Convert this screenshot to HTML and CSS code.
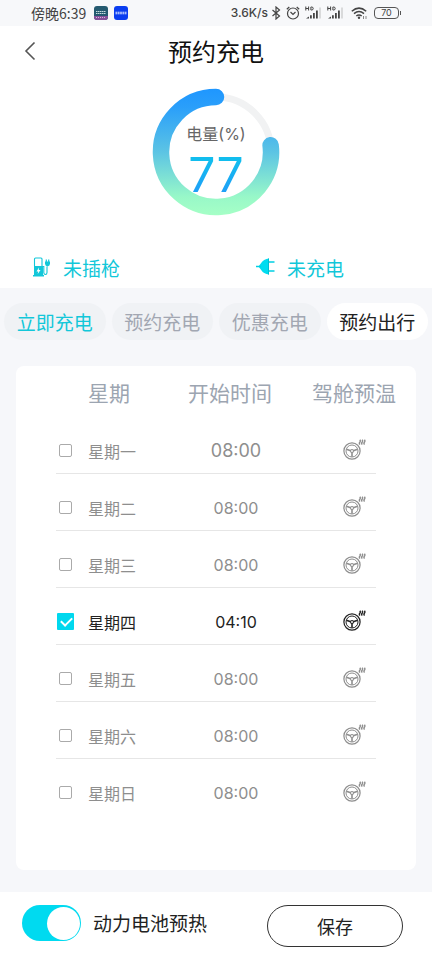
FILE: index.html
```html
<!DOCTYPE html>
<html lang="zh-CN">
<head>
<meta charset="utf-8">
<meta name="viewport" content="width=device-width, initial-scale=1">
<title>预约充电</title>
<link rel="stylesheet" href="styles.css">
</head>
<body>
<svg class="defs" aria-hidden="true">
  <symbol id="wheel" viewBox="0 0 24 22">
    <g fill="none" stroke="currentColor">
      <circle cx="10" cy="12" r="8.100" stroke-width="1.200"/>
      <circle cx="10" cy="12" r="6" stroke-width="1"/>
      <path d="M4.500 10.300L8.600 11.700M15.500 10.300L11.400 11.700M10 13.300V17.700" stroke-width="1.600"/>
      <circle cx="10" cy="12" r="1.500" stroke-width="1.100"/>
      <path d="M17.800 .8q1 1.200 0 2.400t.2 2.400M20.100 .8q1 1.200 0 2.400t.2 2.400M22.400 .8q1 1.200 0 2.400t.2 2.400" stroke-width="1.400"/>
    </g>
  </symbol>
  <symbol id="signal" viewBox="0 0 17 14">
    <g fill="none" stroke="currentColor" stroke-width="1">
      <path d="M.8 .5v4M3.600 .5v4M.8 2.500h2.800M5.900 1v3h.8q1.500 0 1.500-1.500t-1.500-1.500z"/>
    </g>
    <path d="M1 12.500l3-2v2zM5 9.300h1.800v3.200H5zM8 7h1.800v5.500H8zM11 4.500h1.800v8H11z" fill="currentColor"/>
    <path d="M14.500 1.500h1v11h-1z" fill="#bbb"/>
  </symbol>
</svg>

<div class="status">
  <span class="clock">傍晚6:39</span>
  <svg class="app" viewBox="0 0 14 14" aria-hidden="true">
    <rect width="14" height="14" rx="3" fill="#245a70"/>
    <path d="M0 10h14v1q0 3-3 3H3q-3 0-3-3z" fill="#86519a"/>
    <path d="M2 5.500h10M2 7.500h10" stroke="#c4dcdc" stroke-width="1.200" stroke-dasharray="1.500 .5"/>
    <path d="M2 11.500h9" stroke="#d9b6dc" stroke-dasharray="1 1"/>
  </svg>
  <svg class="app" viewBox="0 0 14 14" aria-hidden="true">
    <rect width="14" height="14" rx="3" fill="#0a3df0"/>
    <path d="M1.500 6.300h11M1.500 7.700h11" stroke="#dbe5ff" stroke-width="1.100" stroke-dasharray="1.800 .5"/>
  </svg>
  <span class="speed">3.6K/s</span>
  <svg class="bluetooth" viewBox="0 0 10 14" aria-hidden="true"><path d="M1.500 4l7 6L5 13V1l3.500 3-7 6" fill="none" stroke="currentColor" stroke-width="1.200"/></svg>
  <svg class="alarm" viewBox="0 0 14 14" aria-hidden="true"><g fill="none" stroke="currentColor" stroke-width="1.200"><circle cx="7" cy="7.500" r="5.500"/><path d="M4.500 6L7 8.500 9.500 6M.8 3.200L3.300 1M13.200 3.200L10.700 1"/></g></svg>
  <svg class="signal" aria-hidden="true"><use href="#signal"/></svg>
  <svg class="signal" aria-hidden="true"><use href="#signal"/></svg>
  <svg class="wifi" viewBox="0 0 17 14" aria-hidden="true"><g fill="none" stroke="currentColor" stroke-width="1.500"><path d="M.8 5.200q7.200-6.200 14.400 0M3 7.600q5-4.200 10 0M5.300 10q2.700-2.200 5.400 0"/></g><circle cx="8" cy="11.800" r="1.200" fill="currentColor"/><path d="M12.500 10v3M15 10v3" stroke="#888"/></svg>
  <span class="battery">70</span>
</div>

<header class="top">
  <button class="back" type="button" aria-label="返回"><svg viewBox="0 0 12 20" aria-hidden="true"><path d="M10.500 1.500L2 10l8.500 8.500" fill="none" stroke="currentColor" stroke-width="1.600"/></svg></button>
  <h1>预约充电</h1>
</header>

<section class="charge">
  <div class="gauge">
    <svg viewBox="0 0 128 128" aria-hidden="true">
      <defs><linearGradient id="ring" gradientUnits="userSpaceOnUse" x1="0" y1="0" x2="0" y2="128"><stop offset="0" stop-color="#1e96ff"/><stop offset=".15" stop-color="#2a9ffa"/><stop offset=".5" stop-color="#5cc4e4"/><stop offset=".85" stop-color="#98f8c8"/><stop offset="1" stop-color="#a6ffc6"/></linearGradient></defs>
      <circle cx="64" cy="64" r="55" fill="none" stroke="#f1f2f3" stroke-width="7"/>
      <path d="M64 9A55 55 0 1 0 118.600 57.300" fill="none" stroke="url(#ring)" stroke-width="16.500" stroke-linecap="round"/>
    </svg>
    <div class="reading"><span class="caption">电量(%)</span><strong>77</strong></div>
  </div>
  <div class="states">
    <p class="state">
      <svg viewBox="0 0 20 20" aria-hidden="true"><g fill="none" stroke="currentColor" stroke-width="1.100"><path d="M2.500 9V2q0-1 1-1H9q1 0 1 1v7M10.500 9.500h1.300v6q0 2 1.600 2t1.600-2V9.500"/></g><path d="M2 9h9v9.500H2zM1 18h11v1.500H1zM13 4.500h5v2.300q0 2-2.500 2.700-2.500-.7-2.500-2.700z" fill="currentColor"/><path d="M14.300 2.500v2.500M16.700 2.500v2.500" stroke="currentColor" stroke-width="1.200"/><path d="M7 10.500l-2.500 4h1.700L5.700 17l2.800-4H6.800z" fill="#fff"/></svg>
      未插枪
    </p>
    <p class="state">
      <svg viewBox="0 0 20 20" aria-hidden="true"><path d="M13 1.500v16Q7.500 17 4.800 12.500L2.500 9.500 4.800 6.500Q7.500 2 13 1.500z" fill="#00dcf0"/><path d="M0 9.500h5M13 5h5.500M13 14h5.500" stroke="#00d0e4" stroke-width="1.400" fill="none"/><path d="M12.500 1.500v16" stroke="#00bfd2"/></svg>
      未充电
    </p>
  </div>
</section>

<main>
  <nav class="tabs">
    <button type="button" class="now">立即充电</button>
    <button type="button">预约充电</button>
    <button type="button">优惠充电</button>
    <button type="button" class="current">预约出行</button>
  </nav>
  <div class="card">
    <table>
      <colgroup><col class="c-check"><col class="c-day"><col class="c-time"><col class="c-heat"></colgroup>
      <thead><tr><td></td><th scope="col">星期</th><th scope="col" class="time">开始时间</th><th scope="col" class="heat">驾舱预温</th></tr></thead>
      <tbody>
        <tr><td class="check"><input type="checkbox" id="d1"></td><td><label for="d1">星期一</label></td><td class="time large">08:00</td><td class="heat"><svg role="img" aria-label="驾舱预温"><use href="#wheel"/></svg></td></tr>
        <tr><td class="check"><input type="checkbox" id="d2"></td><td><label for="d2">星期二</label></td><td class="time">08:00</td><td class="heat"><svg role="img" aria-label="驾舱预温"><use href="#wheel"/></svg></td></tr>
        <tr><td class="check"><input type="checkbox" id="d3"></td><td><label for="d3">星期三</label></td><td class="time">08:00</td><td class="heat"><svg role="img" aria-label="驾舱预温"><use href="#wheel"/></svg></td></tr>
        <tr class="active"><td class="check"><input type="checkbox" id="d4" checked></td><td><label for="d4">星期四</label></td><td class="time">04:10</td><td class="heat"><svg role="img" aria-label="驾舱预温"><use href="#wheel"/></svg></td></tr>
        <tr><td class="check"><input type="checkbox" id="d5"></td><td><label for="d5">星期五</label></td><td class="time">08:00</td><td class="heat"><svg role="img" aria-label="驾舱预温"><use href="#wheel"/></svg></td></tr>
        <tr><td class="check"><input type="checkbox" id="d6"></td><td><label for="d6">星期六</label></td><td class="time">08:00</td><td class="heat"><svg role="img" aria-label="驾舱预温"><use href="#wheel"/></svg></td></tr>
        <tr><td class="check"><input type="checkbox" id="d7"></td><td><label for="d7">星期日</label></td><td class="time">08:00</td><td class="heat"><svg role="img" aria-label="驾舱预温"><use href="#wheel"/></svg></td></tr>
      </tbody>
    </table>
  </div>
</main>

<footer>
  <input type="checkbox" role="switch" class="switch" id="preheat" checked>
  <label for="preheat">动力电池预热</label>
  <button type="button" class="save">保存</button>
</footer>
</body>
</html>
```
FILE: styles.css
```css
* { box-sizing: border-box; }

body {
  margin: 0;
  min-height: 100vh;
  display: flex;
  flex-direction: column;
  background: #fff;
  color: #222;
  font-family: "Noto Sans CJK SC", sans-serif;
}

button { font: inherit; margin: 0; padding: 0; border: 0; cursor: pointer; }
svg { display: block; }
.defs { position: absolute; width: 0; height: 0; }

.speed, .battery, .caption, .reading strong, tbody .time {
  font-family: Inter, "Noto Sans CJK SC", sans-serif;
}

/* status bar */
.status {
  display: flex;
  align-items: center;
  height: 26px;
  padding: 0 30px 0 31px;
  background: #f7f8fa;
  color: #444;
  font-size: 14px;
  line-height: 26px;
}
.clock { margin-right: 8px; }
.app { width: 14px; height: 14px; margin-right: 6px; }
.speed { margin-left: auto; font-size: 12px; font-weight: 500; }
.bluetooth { width: 10px; height: 14px; margin-left: 3px; }
.alarm { width: 14px; height: 14px; margin-left: 5px; }
.signal { width: 17px; height: 14px; margin-left: 5px; }
.wifi { width: 17px; height: 14px; margin: 0 6px 0 7px; }
.battery {
  position: relative;
  width: 25px;
  height: 12px;
  margin-right: 3px;
  border: 1px solid #555;
  border-radius: 4px;
  font-size: 9px;
  line-height: 10px;
  text-align: center;
}
.battery::after {
  content: "";
  position: absolute;
  top: 3px;
  right: -3px;
  width: 1px;
  height: 4px;
  background: #555;
}

/* title */
.top {
  display: grid;
  grid-template-columns: 1fr auto 1fr;
  align-items: center;
  height: 50px;
  padding: 0 24px;
}
.back { width: 12px; background: none; color: #555; }
.back svg { width: 12px; height: 20px; }
h1 { margin: 0; font-size: 24px; line-height: 50px; font-weight: 400; color: #111; }

/* battery gauge */
.charge { padding-top: 12px; }
.gauge { display: grid; width: 128px; margin: 0 auto; }
.gauge > * { grid-area: 1 / 1; }
.gauge svg { width: 128px; height: 128px; }
.reading { display: flex; flex-direction: column; align-items: center; padding-top: 34px; }
.caption { font-size: 16px; line-height: 24px; color: #666; }
.reading strong {
  font-size: 48px;
  line-height: 58px;
  font-weight: 400;
  color: transparent;
  background: linear-gradient(#12bdee 25%, #209cf8 85%);
  background-clip: text;
}

.states { display: grid; grid-template-columns: 224px 1fr; padding: 32px 0 2px 32px; }
.state {
  display: flex;
  align-items: center;
  gap: 11px;
  height: 38px;
  margin: 0;
  font-size: 19px;
  color: #12c7d9;
}
.state svg { width: 20px; height: 20px; }

/* schedule */
main { flex: 1; display: flex; flex-direction: column; padding-bottom: 22px; background: #f6f7fa; }
.tabs { display: flex; gap: 6px; padding: 15px 4px 26px; }
.tabs button {
  flex: 1;
  height: 37px;
  border-radius: 19px;
  background: #f0f2f5;
  color: #a2a7b2;
  font-size: 19px;
  white-space: nowrap;
}
.tabs .now { color: #12c7d9; }
.tabs .current { background: #fff; color: #222; }

.card { flex: 1; margin: 0 16px; border-radius: 8px; background: #fff; }
table { width: 100%; table-layout: fixed; border-collapse: collapse; }
.c-check { width: 18%; }
.c-day { width: 23%; }
.c-time { width: 28%; }
.c-heat { width: 31%; }
th, td { padding: 0; text-align: left; white-space: nowrap; }
th { height: 51px; font-size: 21px; font-weight: 400; color: #9ca5b1; }
th.time { padding-right: 12px; }
.time, .heat { text-align: center; }
tbody td { height: 57px; padding-top: 10px; font-size: 16px; color: #8e8e8e; }
tbody tr {
  background: linear-gradient(#e6e6e6, #e6e6e6) center bottom / calc(100% - 80px) 1px no-repeat;
}
tbody tr:last-child { background: none; }
tbody .time.large { font-size: 18px; }
tbody .active td { color: #222; }
tbody .heat { padding-top: 8px; }
.heat svg { width: 24px; height: 22px; margin: 0 auto; }

.check input {
  appearance: none;
  display: block;
  width: 13px;
  height: 13px;
  margin: 0 0 0 43px;
  border: 1px solid #aaa;
  border-radius: 2px;
}
.check input:checked {
  position: relative;
  width: 17px;
  height: 17px;
  margin-left: 41px;
  border: 0;
  border-radius: 1px;
  background: #00d8ee;
}
.check input:checked::before {
  content: "";
  position: absolute;
  left: 4px;
  top: 4px;
  width: 9px;
  height: 5px;
  border: solid #fff;
  border-width: 0 0 2px 2px;
  transform: rotate(-45deg);
}

/* bottom bar */
footer { display: flex; align-items: flex-start; min-height: 68px; padding: 13px 29px 0 22px; }
footer label { margin-left: 12px; font-size: 19px; line-height: 36px; }
.switch {
  appearance: none;
  display: flex;
  align-items: center;
  width: 59px;
  height: 36px;
  margin: 0;
  padding: 0 1px;
  border-radius: 18px;
  background: #ccc;
}
.switch::before {
  content: "";
  width: 33px;
  height: 33px;
  border-radius: 50%;
  background: #fff;
}
.switch:checked { justify-content: flex-end; background: #00daf0; }
.save {
  width: 136px;
  height: 42px;
  margin-left: auto;
  border: 1px solid #333;
  border-radius: 21px;
  background: #fff;
  color: #222;
  font-size: 18px;
}
```
